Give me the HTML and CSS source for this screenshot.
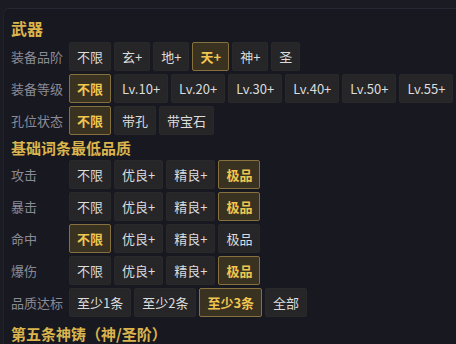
FILE: index.html
```html
<!DOCTYPE html>
<html lang="zh-CN">
<head>
    <meta charset="UTF-8">
    <title>装备筛选</title>
    <link rel="stylesheet" href="styles.css">
</head>
<body>
    <div class="panel">
        <h2 class="group-title first">武器</h2>
        <div class="row">
            <span class="label">装备品阶</span>
            <span class="opt">不限</span>
            <span class="opt">玄+</span>
            <span class="opt">地+</span>
            <span class="opt on">天+</span>
            <span class="opt">神+</span>
            <span class="opt">圣</span>
        </div>
        <div class="row">
            <span class="label">装备等级</span>
            <span class="opt on">不限</span>
            <span class="opt">Lv.10+</span>
            <span class="opt">Lv.20+</span>
            <span class="opt">Lv.30+</span>
            <span class="opt">Lv.40+</span>
            <span class="opt">Lv.50+</span>
            <span class="opt">Lv.55+</span>
        </div>
        <div class="row">
            <span class="label">孔位状态</span>
            <span class="opt on">不限</span>
            <span class="opt">带孔</span>
            <span class="opt">带宝石</span>
        </div>

        <h2 class="group-title">基础词条最低品质</h2>
        <div class="row">
            <span class="label">攻击</span>
            <span class="opt">不限</span>
            <span class="opt">优良+</span>
            <span class="opt">精良+</span>
            <span class="opt on">极品</span>
        </div>
        <div class="row">
            <span class="label">暴击</span>
            <span class="opt">不限</span>
            <span class="opt">优良+</span>
            <span class="opt">精良+</span>
            <span class="opt on">极品</span>
        </div>
        <div class="row">
            <span class="label">命中</span>
            <span class="opt on">不限</span>
            <span class="opt">优良+</span>
            <span class="opt">精良+</span>
            <span class="opt">极品</span>
        </div>
        <div class="row">
            <span class="label">爆伤</span>
            <span class="opt">不限</span>
            <span class="opt">优良+</span>
            <span class="opt">精良+</span>
            <span class="opt on">极品</span>
        </div>
        <div class="row">
            <span class="label">品质达标</span>
            <span class="opt">至少1条</span>
            <span class="opt">至少2条</span>
            <span class="opt on">至少3条</span>
            <span class="opt">全部</span>
        </div>

        <h2 class="group-title last">第五条神铸（神/圣阶）</h2>
    </div>
</body>
</html>
```

FILE: styles.css
```css
body {
    margin: 0;
    background: #1b1b24;
    font-family: "Noto Sans CJK SC", "Noto Sans", sans-serif;
    font-size: 13px;
    color: #d6d6d6;
    overflow: hidden;
}

.panel {
    box-sizing: border-box;
    height: 336px;
    margin: 8px 0 0 3px;
    padding: 10px 0 0 7px;
    background: #181820;
    border-top: 1px solid #282834;
    border-left: 1px solid #22222c;
    border-radius: 6px 0 0 0;
    overflow: hidden;
}

.group-title {
    margin: 3px 0 2px;
    font-size: 15px;
    line-height: 20px;
    font-weight: bold;
    color: #dab44c;
}

.group-title.first {
    margin: -1px 0 4px;
    font-size: 16px;
}

.group-title.last {
    margin-top: 7px;
}

.row {
    display: flex;
    align-items: center;
    gap: 3px;
    margin-bottom: 3px;
}

.label {
    width: 55px;
    color: #8a8a96;
    white-space: nowrap;
}

.opt {
    box-sizing: border-box;
    height: 29px;
    line-height: 27px;
    padding: 0 7px;
    border: 1px solid #29292c;
    border-radius: 2px;
    background: #262628;
    color: #dcdcdc;
    white-space: nowrap;
}

.opt.on {
    background: #3a3221;
    border-color: #86703d;
    color: #f0c650;
    font-weight: bold;
}
```
